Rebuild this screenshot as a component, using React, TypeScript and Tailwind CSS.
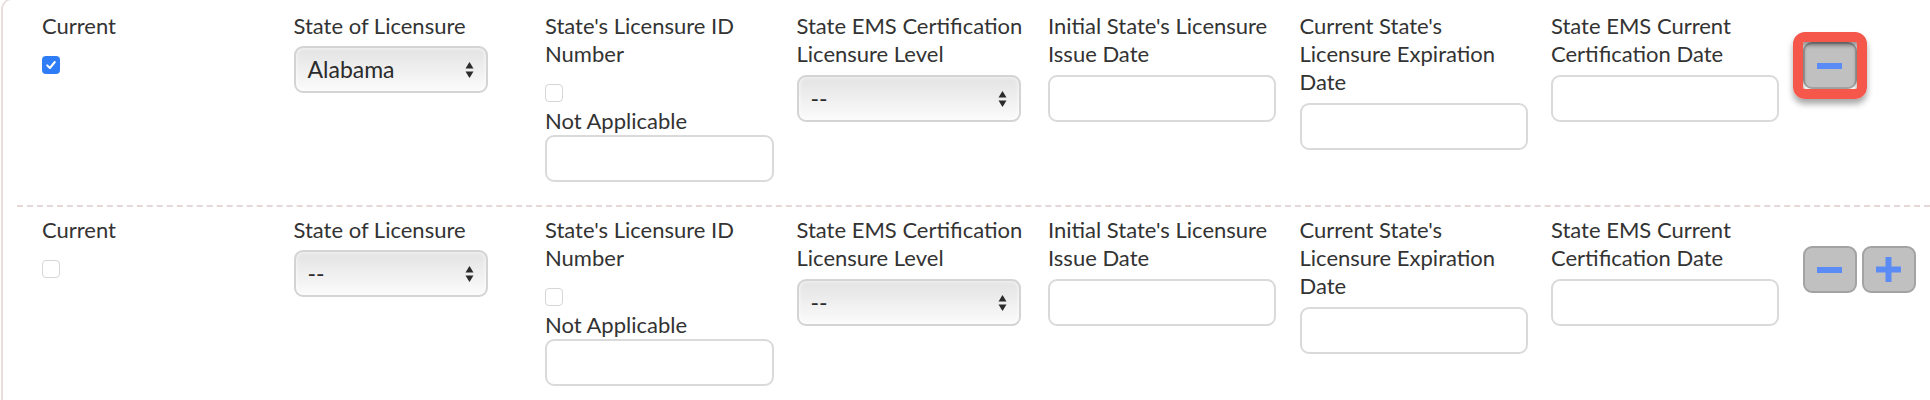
import React from "react";

type Field =
  | { kind: "check"; label: string; checked: boolean }
  | { kind: "select"; label: string; value: string; width: string }
  | { kind: "na"; label: string }
  | { kind: "input"; label: string };

function Checkbox({ checked }: { checked: boolean }) {
  if (checked) {
    return (
      <span className="flex h-[18px] w-[18px] items-center justify-center rounded-[4px] bg-[#2f7df6]">
        <svg width="12" height="12" viewBox="0 0 12 12">
          <path d="M2.2 6.4 L4.9 9 L9.8 3" fill="none" stroke="#fff" strokeWidth="2" strokeLinecap="round" strokeLinejoin="round" />
        </svg>
      </span>
    );
  }
  return <span className="block h-[18px] w-[18px] rounded-[4px] border border-[#d6d6d6] bg-white" />;
}

function Select({ value, width }: { value: string; width: string }) {
  return (
    <div
      className={`flex h-[47px] ${width} items-center justify-between rounded-[9px] border-2 border-[#d4d4d4] bg-gradient-to-b from-[#e3e3e3] via-[#efefef] to-[#fbfbfb] pl-[12px] pr-[12px] shadow-[inset_0_0_4px_rgba(255,255,255,0.9)]`}
    >
      <span className="text-[23px] leading-none text-[#2b2b2b]">{value}</span>
      <svg width="9" height="18" viewBox="0 0 9 18" className="text-[#2b2b2b]">
        <path d="M4.5 1 L8.5 7.5 L0.5 7.5 Z" fill="currentColor" />
        <path d="M0.5 10.5 L8.5 10.5 L4.5 17 Z" fill="currentColor" />
      </svg>
    </div>
  );
}

function TextBox({ width = "w-[228px]" }: { width?: string }) {
  return <div className={`h-[47px] ${width} rounded-[9px] border-2 border-[#dadada] bg-white`} />;
}

function IconButton({ sign }: { sign: "minus" | "plus" }) {
  return (
    <button className="flex h-[47px] w-[54px] items-center justify-center rounded-[9px] border-2 border-[#a3a3a3] bg-[#c0c0c0]">
      {sign === "minus" ? (
        <span className="block h-[6px] w-[25px] bg-[#5b8cf6]" />
      ) : (
        <svg width="25" height="25" viewBox="0 0 25 25">
          <rect x="0" y="9.5" width="25" height="6" fill="#5b8cf6" />
          <rect x="9.5" y="0" width="6" height="25" fill="#5b8cf6" />
        </svg>
      )}
    </button>
  );
}

function Column({ field }: { field: Field }) {
  return (
    <div className="w-[251.5px] shrink-0">
      <div className="w-[229px] text-[22px] leading-[28px] text-[#333]">{field.label}</div>
      {field.kind === "check" && (
        <div className="mt-4">
          <Checkbox checked={field.checked} />
        </div>
      )}
      {field.kind === "select" && (
        <div className={field.label === "State of Licensure" ? "mt-[6px]" : "mt-[7px]"}>
          <Select value={field.value} width={field.width} />
        </div>
      )}
      {field.kind === "na" && (
        <div>
          <div className="mt-4">
            <Checkbox checked={false} />
          </div>
          <div className="mt-[5px] text-[22px] leading-[28px] text-[#333]">Not Applicable</div>
          <TextBox width="w-[229px]" />
        </div>
      )}
      {field.kind === "input" && (
        <div className="mt-[7px]">
          <TextBox />
        </div>
      )}
    </div>
  );
}

function LicenseRow({ current, state, highlight, showAdd }: { current: boolean; state: string; highlight?: boolean; showAdd?: boolean }) {
  const fields: Field[] = [
    { kind: "check", label: "Current", checked: current },
    { kind: "select", label: "State of Licensure", value: state, width: "w-[194px]" },
    { kind: "na", label: "State's Licensure ID Number" },
    { kind: "select", label: "State EMS Certification Licensure Level", value: "--", width: "w-[224px]" },
    { kind: "input", label: "Initial State's Licensure Issue Date" },
    { kind: "input", label: "Current State's Licensure Expiration Date" },
    { kind: "input", label: "State EMS Current Certification Date" },
  ];

  return (
    <div className="flex items-start pl-[39px]">
      {fields.map((f, i) => (
        <Column key={i} field={f} />
      ))}
      <div className="mt-[30px] flex items-start gap-[5px]">
        <div className="relative">
          <IconButton sign="minus" />
          {highlight && (
            <span className="pointer-events-none absolute -inset-[10px] rounded-[12px] border-[10px] border-[#f5574a] shadow-[0_5px_6px_rgba(0,0,0,0.35),inset_0_3px_4px_rgba(0,0,0,0.45)]" />
          )}
        </div>
        {showAdd && <IconButton sign="plus" />}
      </div>
    </div>
  );
}

export default function App() {
  return (
    <div className="h-[400px] w-[1930px] overflow-hidden bg-white font-['Lato',sans-serif]">
      <div className="-mt-px ml-px h-[420px] rounded-tl-[10px] border-l-2 border-t border-[#e9dcdc]">
        <div className="pt-[12px] pb-[23px]">
          <LicenseRow current state="Alabama" highlight />
        </div>
        <div className="ml-[14px] border-t-2 border-dashed border-[#e6d8d8]" />
        <div className="pt-[9px]">
          <LicenseRow current={false} state="--" showAdd />
        </div>
      </div>
    </div>
  );
}
